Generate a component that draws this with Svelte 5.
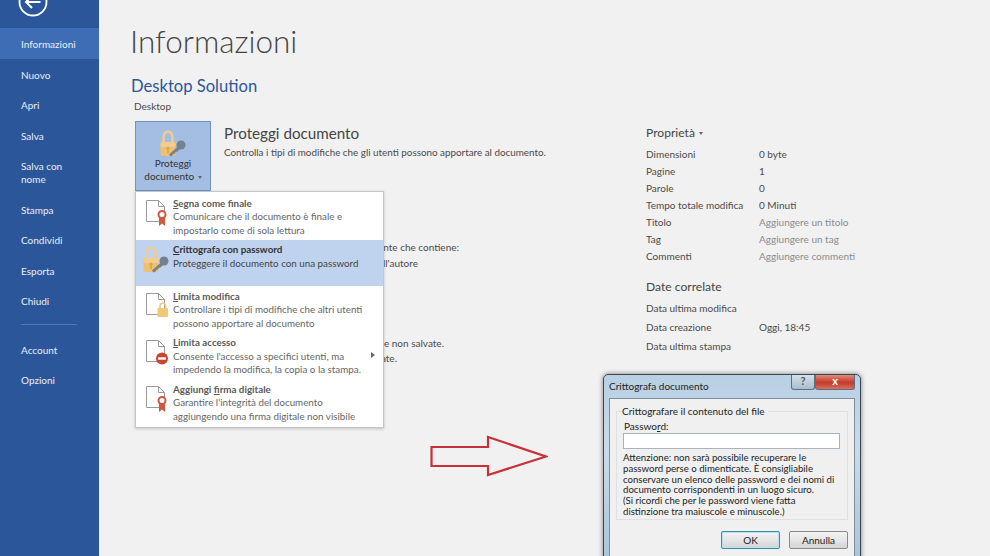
<script>
  const nav = [
    { label: 'Informazioni', active: true },
    { label: 'Nuovo' },
    { label: 'Apri' },
    { label: 'Salva' },
    { label: 'Salva con nome', tall: true },
    { label: 'Stampa' },
    { label: 'Condividi' },
    { label: 'Esporta' },
    { label: 'Chiudi' }
  ];
  const props = [
    ['Dimensioni', '0 byte'],
    ['Pagine', '1'],
    ['Parole', '0'],
    ['Tempo totale modifica', '0 Minuti'],
    ['Titolo', 'Aggiungere un titolo', true],
    ['Tag', 'Aggiungere un tag', true],
    ['Commenti', 'Aggiungere commenti', true]
  ];
  const dates = [
    ['Data ultima modifica', ''],
    ['Data creazione', 'Oggi, 18:45'],
    ['Data ultima stampa', '']
  ];
</script>

{#snippet lock()}
  <svg class="lock" viewBox="0 0 26 27" width="26" height="27">
    <path d="M3.500 13V7a4.500 5.500 0 0 1 9 0v6" fill="none" stroke="#eccd92" stroke-width="2.600" />
    <rect x="0.500" y="12" width="15" height="14" rx="2.500" fill="#efc071" />
    <rect x="0.500" y="12" width="15" height="5" rx="2.500" fill="#f3cd8c" />
    <path d="M8 16.500a1.800 1.800 0 0 1 1 3.300V23H7v-3.200a1.800 1.800 0 0 1 1-3.300z" fill="#d9a95c" />
    <circle cx="21" cy="15" r="4.500" fill="#75818e" />
    <path d="M18.500 16 9 24.500l1.500 2 2-1 .5-1.500 2-.5.5-1.500 2-.5 3.500-3.500z" fill="#75818e" />
  </svg>
{/snippet}

{#snippet docIcon(badge)}
  <svg class="doc" viewBox="0 0 26 28" width="26" height="28">
    <path d="M1.500 1.500h12l6 6v15h-18z" fill="#fff" stroke="#9a9a9a" />
    <path d="M13.500 1.500v6h6" fill="none" stroke="#9a9a9a" />
    {#if badge === 'ribbon'}
      <path d="M14 17h6v10l-3-2.500-3 2.500z" fill="#d0583f" />
      <circle cx="17" cy="15.500" r="3.500" fill="#fff" stroke="#d0583f" stroke-width="2" />
    {:else if badge === 'lock'}
      <path d="M15 16v-2a2.800 2.800 0 0 1 5.600 0v2" fill="none" stroke="#e8ca8c" stroke-width="1.600" />
      <rect x="12.500" y="16" width="10.500" height="9" rx="1" fill="#f1c874" />
    {:else}
      <circle cx="17" cy="19.500" r="6" fill="#c9452f" />
      <rect x="13" y="18.300" width="8" height="2.400" fill="#fff" />
    {/if}
  </svg>
{/snippet}

<div class="app">
  <nav class="side">
    <div class="back">
      <svg viewBox="0 0 30 30" width="30" height="30">
        <circle cx="15" cy="15" r="13.500" fill="none" stroke="#fff" stroke-width="1.800" />
        <path d="M22.500 15H8.500M14 9l-6 6 6 6" fill="none" stroke="#fff" stroke-width="2" />
      </svg>
    </div>
    <ul class="nav-list">
      {#each nav as item}
        <li class:active={item.active} class:tall={item.tall}>{item.label}</li>
      {/each}
    </ul>
    <div class="nav-sep"></div>
    <ul class="nav-list">
      <li>Account</li>
      <li>Opzioni</li>
    </ul>
  </nav>

  <main class="main">
    <h1>Informazioni</h1>
    <h2>Desktop Solution</h2>
    <div class="path">Desktop</div>

    <div class="cols">
      <div class="left">
        <section class="protect">
          <button type="button" class="protect-btn">
            {@render lock()}
            <span>Proteggi<br />documento <i class="caret"></i></span>
          </button>
          <div>
            <h3>Proteggi documento</h3>
            <p>Controlla i tipi di modifiche che gli utenti possono apportare al documento.</p>
          </div>
        </section>

        <section class="behind first">
          <p class="w-a">Prima di pubblicare il file, tenere presente che contiene:</p>
          <p class="w-b">Proprietà del documento e nome dell'autore</p>
        </section>
        <section class="behind second">
          <p class="w-c">Non sono presenti modifiche non salvate.</p>
          <p class="w-d">Versioni recuperate.</p>
        </section>

        <div class="menu">
          <div class="menu-item">
            {@render docIcon('ribbon')}
            <div class="menu-text">
              <strong><u>S</u>egna come finale</strong>
              <span>Comunicare che il documento è finale e<br />impostarlo come di sola lettura</span>
            </div>
          </div>
          <div class="menu-item hot">
            {@render lock()}
            <div class="menu-text">
              <strong><u>C</u>rittografa con password</strong>
              <span>Proteggere il documento con una password</span>
            </div>
          </div>
          <div class="menu-item">
            {@render docIcon('lock')}
            <div class="menu-text">
              <strong><u>L</u>imita modifica</strong>
              <span>Controllare i tipi di modifiche che altri utenti<br />possono apportare al documento</span>
            </div>
          </div>
          <div class="menu-item">
            {@render docIcon('stop')}
            <div class="menu-text">
              <strong><u>L</u>imita accesso</strong>
              <span>Consente l'accesso a specifici utenti, ma<br />impedendo la modifica, la copia o la stampa.</span>
            </div>
            <i class="arrow-right"></i>
          </div>
          <div class="menu-item">
            {@render docIcon('ribbon')}
            <div class="menu-text">
              <strong>Aggiungi <u>f</u>irma digitale</strong>
              <span>Garantire l'integrità del documento<br />aggiungendo una firma digitale non visibile</span>
            </div>
          </div>
        </div>
      </div>

      <aside class="right">
        <h3>Proprietà <i class="caret"></i></h3>
        <dl class="props">
          {#each props as [k, v, muted]}
            <dt>{k}</dt>
            <dd class:muted>{v}</dd>
          {/each}
        </dl>
        <h3 class="dates-title">Date correlate</h3>
        <dl class="props dates">
          {#each dates as [k, v]}
            <dt>{k}</dt>
            <dd>{v}</dd>
          {/each}
        </dl>
      </aside>
    </div>
  </main>

  <svg class="big-arrow" viewBox="0 0 118 44" width="118" height="44">
    <path d="M1.500 12H58V2l58 19.500L58 40V31H1.500z" fill="#f1f1f1" stroke="#c8303a" stroke-width="2.200" />
  </svg>

  <div class="dialog">
    <div class="dlg-title">
      <span>Crittografa documento</span>
      <div class="dlg-ctrls">
        <b class="help">?</b>
        <b class="close">x</b>
      </div>
    </div>
    <div class="dlg-body">
      <fieldset>
        <legend>Crittografare il contenuto del file</legend>
        <div class="pw-label">Passwo<u>r</u>d:</div>
        <div class="pw-input"></div>
        <p>Attenzione: non sarà possibile recuperare le<br />password perse o dimenticate. È consigliabile<br />conservare un elenco delle password e dei nomi di<br />documento corrispondenti in un luogo sicuro.<br />(Si ricordi che per le password viene fatta<br />distinzione tra maiuscole e minuscole.)</p>
      </fieldset>
      <div class="dlg-btns">
        <button type="button" class="default">OK</button>
        <button type="button">Annulla</button>
      </div>
    </div>
  </div>
</div>

<style>
  :global(body) {
    margin: 0;
    overflow: hidden;
  }

  .app {
    display: flex;
    position: relative;
    width: 990px;
    height: 556px;
    overflow: hidden;
    background: #f1f1f1;
    font-family: Lato, "Liberation Sans", sans-serif;
    font-size: 10px;
    color: #4a4a4a;
  }

  /* sidebar */
  .side {
    width: 99px;
    flex: none;
    background: #2b579a;
    color: #fff;
  }

  .back {
    height: 28px;
    padding-left: 18px;
    overflow: hidden;
  }

  .back svg {
    margin-top: -13px;
    display: block;
  }

  .nav-list {
    list-style: none;
    margin: 0;
    padding: 0;
  }

  .nav-list li {
    height: 30.500px;
    line-height: 32px;
    padding-left: 21px;
    color: #e8eef7;
  }

  .nav-list li.tall {
    height: 43.500px;
    width: 80px;
    line-height: 13px;
    padding-top: 10px;
    box-sizing: border-box;
  }

  .nav-list li.active {
    background: #3e6db5;
  }

  .nav-sep {
    height: 1px;
    margin: 8px 22px 9px 21px;
    background: #4f77b0;
  }

  /* main */
  .main {
    flex: 1;
    padding: 0 0 0 32px;
    min-width: 0;
  }

  h1 {
    margin: 21px 0 0 -1px;
    font-size: 31.500px;
    line-height: 40px;
    font-weight: 300;
    color: #444;
  }

  h2 {
    margin: 13px 0 0;
    font-size: 16.600px;
    line-height: 24px;
    font-weight: 400;
    color: #2b579a;
  }

  .path {
    margin: 1px 0 0 3px;
    line-height: 14px;
  }

  .cols {
    display: flex;
    margin: 8px 0 0 4px;
  }

  .left {
    width: 511px;
    flex: none;
    position: relative;
  }

  .protect {
    display: flex;
    gap: 13px;
  }

  .protect-btn {
    width: 76px;
    height: 70px;
    flex: none;
    padding: 8px 0 0;
    background: #a3bde3;
    border: 1px solid #6d93c7;
    font: inherit;
    line-height: 13px;
    color: #333;
    display: flex;
    flex-direction: column;
    align-items: center;
  }

  .protect-btn .lock {
    flex: none;
  }

  h3 {
    margin: 3px 0 0;
    font-size: 15.200px;
    line-height: 18px;
    font-weight: 400;
    color: #444;
  }

  .protect p {
    margin: 3px 0 0;
    font-size: 9.850px;
    line-height: 14px;
  }

  .caret {
    display: inline-block;
    vertical-align: middle;
    border: 2.500px solid transparent;
    border-top: 3px solid #666;
    border-bottom: 0;
    margin-left: 1px;
  }

  .behind p {
    margin: 0;
    line-height: 15px;
    text-align: right;
    white-space: nowrap;
  }

  .behind .w-a {
    width: 324px;
  }

  .behind .w-b {
    width: 283px;
    margin-top: 1px;
  }

  .behind .w-c {
    width: 309px;
  }

  .behind .w-d {
    width: 262px;
  }

  .behind.first {
    margin-top: 49px;
  }

  .behind.second {
    margin-top: 65px;
  }

  /* dropdown */
  .menu {
    position: absolute;
    left: 0;
    top: 70px;
    width: 247px;
    background: #fff;
    border: 1px solid #c6c6c6;
    box-shadow: 0 1px 3px rgba(0, 0, 0, 0.2);
    padding: 1px 0;
  }

  .menu-item {
    position: relative;
    display: flex;
    height: 46.500px;
    padding: 0 0 0 8px;
    color: #666;
    font-size: 9.800px;
  }

  .menu-item.hot {
    background: #bfd3ee;
    color: #444;
  }

  .menu-item .doc {
    margin: 6px 2px 0 1px;
    flex: none;
  }

  .menu-item .lock {
    margin: 6px 4px 0 -1px;
    flex: none;
  }

  .menu-text {
    padding-top: 3.500px;
    line-height: 13.500px;
    white-space: nowrap;
  }

  .menu-text strong {
    display: block;
    font-weight: 700;
    color: #5a5a5a;
  }

  .hot .menu-text strong {
    color: #333;
  }

  .menu-text span {
    display: block;
  }

  .arrow-right {
    position: absolute;
    right: 8px;
    top: 19px;
    border: 3px solid transparent;
    border-left: 4px solid #666;
    border-right: 0;
  }

  /* properties */
  .right h3 {
    margin-top: 3px;
    font-size: 12.100px;
  }

  .props {
    display: grid;
    grid-template-columns: 113px 1fr;
    grid-auto-rows: 17px;
    margin: 3px 0 0;
    align-items: center;
  }

  .props dt,
  .props dd {
    margin: 0;
  }

  .props dd.muted {
    color: #8c8c8c;
  }

  .right .dates-title {
    margin-top: 14px;
  }

  .dates {
    grid-auto-rows: 19.300px;
    margin-top: 2px;
  }

  /* arrow */
  .big-arrow {
    position: absolute;
    left: 430px;
    top: 435px;
  }

  /* dialog */
  .dialog {
    position: absolute;
    left: 603px;
    top: 374px;
    width: 258px;
    height: 190px;
    box-sizing: border-box;
    background: linear-gradient(#b9cfe4, #c9dbe9 40%, #a9c3d8);
    border: 1px solid #3a4854;
    border-radius: 5px;
    box-shadow: 0 0 5px rgba(0, 0, 0, 0.5);
    padding: 0 5px;
    color: #222;
  }

  .dlg-title {
    display: flex;
    justify-content: space-between;
    height: 23px;
    line-height: 23px;
    color: #222;
  }

  .dlg-ctrls {
    display: flex;
  }

  .dlg-ctrls b {
    height: 14px;
    line-height: 12px;
    text-align: center;
    color: #fff;
    font-size: 11px;
    font-weight: 700;
    border: 1px solid #5d6f7f;
    border-top: 0;
    border-radius: 0 0 3px 3px;
  }

  .help {
    width: 22px;
    background: linear-gradient(#d5e0ea, #aabccc);
    color: #556 !important;
  }

  .close {
    width: 38px;
    background: linear-gradient(#e08b7a, #c5392a 55%, #d7705f);
  }

  .dlg-body {
    background: #f0f0f0;
    border: 1px solid #7f8e9b;
    height: 170px;
    padding: 7px 6px 0;
    box-sizing: border-box;
  }

  fieldset {
    margin: 0;
    padding: 0 7px;
    min-width: 0;
    border: 1px solid #e0e0e0;
    height: 114px;
    box-sizing: border-box;
  }

  legend {
    padding: 0 3px 0 0;
    line-height: 10px;
    margin-left: -2px;
  }

  .pw-label {
    margin-top: 3px;
    line-height: 14px;
  }

  .pw-input {
    height: 14px;
    margin-left: -1px;
    background: #fff;
    border: 1px solid #a9b3bc;
  }

  fieldset p {
    margin: 3px 0 0 -1px;
    font-size: 9.650px;
    line-height: 10.800px;
    white-space: nowrap;
  }

  .dlg-btns {
    display: flex;
    justify-content: flex-end;
    gap: 9px;
    margin-top: 11px;
  }

  .dlg-btns button {
    width: 59px;
    height: 18px;
    padding: 0;
    font: inherit;
    color: #222;
    background: linear-gradient(#f3f3f3, #e6e6e6 50%, #d4d4d4);
    border: 1px solid #8a8a8a;
    border-radius: 2px;
  }

  .dlg-btns button.default {
    border-color: #3c8ea8;
    box-shadow: inset 0 0 0 1px #b5e3f2;
  }
</style>
